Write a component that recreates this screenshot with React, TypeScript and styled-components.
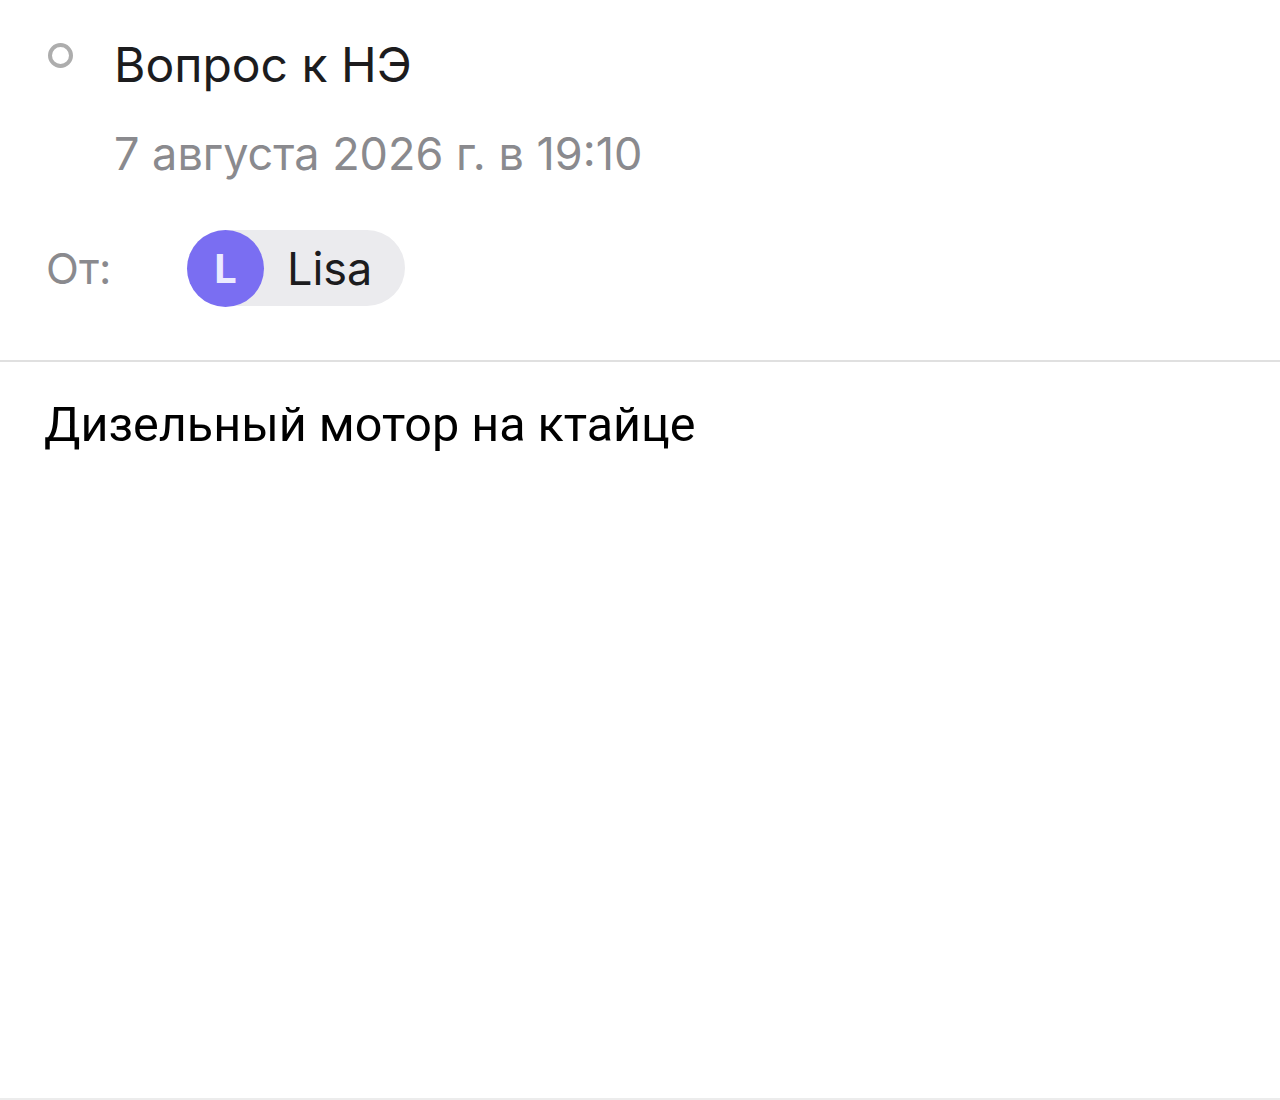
import React from 'react';
import styled, { createGlobalStyle } from 'styled-components';

const GlobalStyle = createGlobalStyle`
  html, body {
    margin: 0;
    padding: 0;
    background: #fff;
  }
  body {
    font-family: Inter, "Noto Sans", sans-serif;
  }
`;

const Page = styled.div`
  width: 1280px;
  height: 1100px;
  display: flex;
  flex-direction: column;
  background: #fff;
  box-sizing: border-box;
  border-bottom: 2px solid #ececec;
`;

const Header = styled.div`
  padding: 36px 0 54px 46px;
  border-bottom: 2px solid #e0e0e0;
`;

const TitleRow = styled.div`
  display: flex;
  align-items: flex-start;
`;

const StatusDot = styled.span`
  width: 25px;
  height: 25px;
  border: 4px solid #adadad;
  border-radius: 50%;
  box-sizing: border-box;
  margin: 7px 0 0 2px;
  flex-shrink: 0;
`;

const Title = styled.h1`
  margin: 0 0 0 41px;
  font-family: Inter, "Noto Sans", sans-serif;
  font-weight: 400;
  font-size: 48px;
  line-height: 58px;
  color: #1c1c1e;
`;

const DateLine = styled.div`
  margin: 34px 0 0 68px;
  font-family: Inter, "Noto Sans", sans-serif;
  font-size: 45px;
  line-height: 52px;
  color: #8a8a8e;
`;

const FromRow = styled.div`
  display: flex;
  align-items: center;
  margin-top: 50px;
`;

const FromLabel = styled.span`
  width: 141px;
  font-family: Inter, "Noto Sans", sans-serif;
  font-size: 43px;
  color: #8a8a8e;
`;

const Chip = styled.div`
  display: flex;
  align-items: center;
  height: 76px;
  padding-right: 33px;
  border-radius: 38px;
  background: #ebebee;
`;

const Avatar = styled.span<{ $color: string }>`
  width: 77px;
  height: 77px;
  border-radius: 50%;
  background: ${(p) => p.$color};
  color: #ecebff;
  display: flex;
  align-items: center;
  justify-content: center;
  font-family: Inter, "Noto Sans", sans-serif;
  font-weight: 700;
  font-size: 40px;
`;

const ChipName = styled.span`
  margin-left: 23px;
  font-family: Inter, "Noto Sans", sans-serif;
  font-size: 45px;
  color: #1c1c1e;
`;

const Body = styled.div`
  padding: 33px 0 0 44px;
  font-family: Roboto, "Noto Sans", sans-serif;
  font-size: 48.5px;
  line-height: 60px;
  color: #000;
`;

export default function App() {
  return (
    <>
      <GlobalStyle />
      <Page>
        <Header>
          <TitleRow>
            <StatusDot />
            <Title>Вопрос к НЭ</Title>
          </TitleRow>
          <DateLine>7 августа 2026 г. в 19:10</DateLine>
          <FromRow>
            <FromLabel>От:</FromLabel>
            <Chip>
              <Avatar $color="#7a6ef2">L</Avatar>
              <ChipName>Lisa</ChipName>
            </Chip>
          </FromRow>
        </Header>
        <Body>Дизельный мотор на ктайце</Body>
      </Page>
    </>
  );
}
